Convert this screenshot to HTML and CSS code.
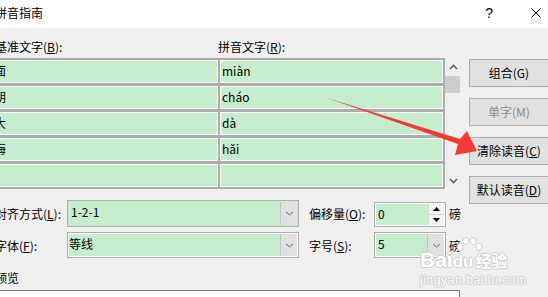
FILE: index.html
```html
<!DOCTYPE html>
<html>

<head>
  <meta name="viewport" content="width=device-width, initial-scale=1.0">
  <link rel="stylesheet" href="styles.css">
</head>

<body>
  <div class="dlg">
    <!-- Title bar -->
    <div class="titlebar">
      <span class="title">拼音指南</span>
      <span class="help">?</span>
      <svg class="close" width="10" height="10" viewBox="0 0 10 10">
        <path d="M0.5 0.5 L9.5 9.5 M9.5 0.5 L0.5 9.5" stroke="#000" stroke-width="1" fill="none"/>
      </svg>
    </div>

    <div class="body">
      <div class="leftcol">
        <div class="labels">
          <span class="lab1">基准文字(<u>B</u>):</span>
          <span>拼音文字(<u>R</u>):</span>
        </div>

        <!-- Character / pinyin list -->
        <div class="list">
          <div class="grid">
            <div class="cell">面</div><div class="cell">miàn</div>
            <div class="cell">朝</div><div class="cell">cháo</div>
            <div class="cell">大</div><div class="cell">dà</div>
            <div class="cell">海</div><div class="cell">hǎi</div>
            <div class="cell"></div><div class="cell"></div>
          </div>
          <div class="scroll">
            <div class="sarrow">
              <svg width="9" height="6" viewBox="0 0 9 6"><path d="M1 5 L4.5 1.5 L8 5" stroke="#606060" stroke-width="1.6" fill="none"/></svg>
            </div>
            <div class="thumb"></div>
            <div class="strack"></div>
            <div class="sarrow">
              <svg width="9" height="6" viewBox="0 0 9 6"><path d="M1 1 L4.5 4.5 L8 1" stroke="#606060" stroke-width="1.6" fill="none"/></svg>
            </div>
          </div>
        </div>

        <!-- Options -->
        <div class="formrow row1">
          <span class="flabel">对齐方式(<u>L</u>):</span>
          <div class="combo">
            <span class="val">1-2-1</span>
            <div class="drop">
              <svg width="9" height="5" viewBox="0 0 9 5"><path d="M1 0.8 L4.5 4 L8 0.8" stroke="#606060" stroke-width="1" fill="none"/></svg>
            </div>
          </div>
          <span class="olabel">偏移量(<u>O</u>):</span>
          <div class="spin inner">
            <span class="val">0</span>
            <div class="spinbtns">
              <div class="sb"><svg width="7" height="4" viewBox="0 0 7 4"><path d="M0 4 L3.5 0 L7 4 Z" fill="#000"/></svg></div>
              <div class="sb"><svg width="7" height="4" viewBox="0 0 7 4"><path d="M0 0 L3.5 4 L7 0 Z" fill="#000"/></svg></div>
            </div>
          </div>
          <span class="unit">磅</span>
        </div>

        <div class="formrow row2">
          <span class="flabel">字体(<u>F</u>):</span>
          <div class="combo inner">
            <span class="val tight">等线</span>
            <div class="drop">
              <svg width="9" height="5" viewBox="0 0 9 5"><path d="M1 0.8 L4.5 4 L8 0.8" stroke="#606060" stroke-width="1" fill="none"/></svg>
            </div>
          </div>
          <span class="olabel">字号(<u>S</u>):</span>
          <div class="spin inner">
            <span class="val">5</span>
            <div class="drop">
              <svg width="9" height="5" viewBox="0 0 9 5"><path d="M1 0.8 L4.5 4 L8 0.8" stroke="#606060" stroke-width="1" fill="none"/></svg>
            </div>
          </div>
          <span class="unit">磅</span>
        </div>

        <div class="plabel">预览</div>
        <div class="preview"></div>
      </div>

      <!-- Buttons -->
      <div class="btncol">
        <div class="btn">组合(G)</div>
        <div class="btn disabled">单字(M)</div>
        <div class="btn">清除读音(<u>C</u>)</div>
        <div class="btn">默认读音(<u>D</u>)</div>
      </div>
    </div>
  </div>

  <!-- Watermark -->
  <div class="watermark">
    <svg class="paw" width="28" height="18" viewBox="0 0 28 18">
      <ellipse cx="5" cy="11" rx="3" ry="3.6" fill="#fff" stroke="#cfcfcf"/>
      <ellipse cx="11" cy="5" rx="3" ry="3.6" fill="#fff" stroke="#cfcfcf"/>
      <ellipse cx="18" cy="5" rx="3" ry="3.6" fill="#fff" stroke="#cfcfcf"/>
      <ellipse cx="24" cy="11" rx="3" ry="3.6" fill="#fff" stroke="#cfcfcf"/>
    </svg>
    <div class="wm-main"><span>Bai</span><span class="du">du</span><span class="jy">经验</span></div>
    <div class="wm-url">jingyan.baidu.com</div>
  </div>

  <!-- Red annotation arrow -->
  <svg class="arrow" width="548" height="297" viewBox="0 0 548 297">
    <polygon points="327,98 460,139 467,131 477,151 455,155 458,144" fill="#f33a35"/>
  </svg>
</body>
</html>
```

FILE: styles.css
```css
/* dialog look, classic windows style */
body {
  margin: 0;
  width: 548px;
  height: 297px;
  overflow: hidden;
  position: relative;
  background-color: #f0f0f0;
  font-family: "Noto Sans CJK SC", "Microsoft YaHei", sans-serif;
  font-size: 12px;
  color: #000;
}

u {
  text-decoration: underline;
  text-underline-offset: 1px;
}

.dlg {
  margin-left: -5px;
  width: 553px;
}

.titlebar {
  height: 28px;
  background-color: #fff;
  display: flex;
  align-items: center;
  padding-bottom: 2px;
  box-sizing: border-box;
}

.title {
  flex: 1;
  line-height: 16px;
}

.help {
  font-size: 14px;
  margin-right: 38px;
  font-family: "Liberation Sans", sans-serif;
}

.close {
  margin-right: 7px;
}

.body {
  display: flex;
}

.leftcol {
  width: 467px;
}

.labels {
  display: flex;
  height: 30px;
  padding-top: 11px;
  box-sizing: border-box;
  line-height: 16px;
}

.lab1 {
  width: 223px;
}

.list {
  display: flex;
  height: 131px;
}

.grid {
  margin-left: -5px;
  width: 455px;
  display: grid;
  grid-template-columns: 226px 223px;
  grid-auto-rows: 23px;
  gap: 3px 2px;
  padding: 2px;
  box-sizing: border-box;
  background-color: #acacac;
}

.cell {
  background-color: #c6edcd;
  border: 1px solid #fff;
  padding-left: 1px;
  line-height: 20px;
  box-sizing: border-box;
}

.scroll {
  width: 17px;
  display: flex;
  flex-direction: column;
}

.sarrow {
  height: 17px;
  display: flex;
  align-items: center;
  justify-content: center;
}

.thumb {
  width: 15px;
  height: 17px;
  margin-top: 1px;
  background-color: #cdcdcd;
}

.strack {
  flex: 1;
}

.formrow {
  display: flex;
  align-items: center;
}

.row1 {
  margin-top: 11px;
  height: 27px;
}

.row2 {
  margin-top: 5px;
  height: 26px;
}

.flabel {
  width: 72px;
}

.combo {
  width: 232px;
  height: 100%;
  box-sizing: border-box;
  border: 1px solid #adadad;
  background-color: #c6edcd;
  display: flex;
}

.combo .val,
.spin .val {
  flex: 1;
  padding-left: 3px;
  line-height: 22px;
}

.combo .tight {
  padding-left: 1px;
}

.inner {
  box-shadow: inset 0 0 0 1px #fff;
}

.drop {
  width: 16px;
  margin: 1px 1px 1px 0;
  border-left: 1px solid #c4c4c4;
  background-color: #e1e1e1;
  display: flex;
  align-items: center;
  justify-content: center;
}

.olabel {
  margin-left: 10px;
  width: 65px;
}

.spin {
  width: 72px;
  height: 26px;
  box-sizing: border-box;
  border: 1px solid #adadad;
  background-color: #c6edcd;
  display: flex;
}

.row1 .spin {
  height: 25px;
  margin-top: 2px;
}

.spinbtns {
  width: 15px;
  margin: 1px 1px 1px 0;
  display: flex;
  flex-direction: column;
  background-color: #f4f4f4;
  border-left: 1px solid #d4d4d4;
}

.sb {
  flex: 1;
  display: flex;
  align-items: center;
  justify-content: center;
}

.sb + .sb {
  border-top: 1px solid #d4d4d4;
}

.unit {
  margin-left: 3px;
}

.plabel {
  margin-top: 12px;
  line-height: 16px;
}

.preview {
  margin-top: 4px;
  width: 465px;
  height: 20px;
  box-sizing: border-box;
  border-top: 1px solid #7f7f7f;
  border-right: 1px solid #7f7f7f;
  background-color: #fff;
}

.btncol {
  padding-left: 7px;
  padding-top: 31px;
}

.btn {
  width: 80px;
  height: 28px;
  margin-bottom: 11px;
  box-sizing: border-box;
  border: 1px solid #adadad;
  background-color: #e1e1e1;
  text-align: center;
  line-height: 25px;
}

.btn.disabled {
  color: #8d8d8d;
}

.watermark {
  position: absolute;
  left: 420px;
  top: 236px;
  color: #fff;
  pointer-events: none;
}

.paw {
  position: absolute;
  left: 35px;
  top: 0;
}

.wm-main {
  margin-top: 12px;
  font-family: "Liberation Sans", "Noto Sans CJK SC", sans-serif;
  font-size: 21px;
  font-weight: bold;
  line-height: 24px;
  text-shadow: 1px 0 #cfcfcf, -1px 0 #cfcfcf, 0 1px #cfcfcf, 0 -1px #cfcfcf;
}

.du {
  font-size: 17px;
}

.jy {
  font-family: "Noto Sans CJK SC", sans-serif;
  font-size: 16px;
  margin-left: 2px;
}

.wm-url {
  font-family: "Liberation Sans", sans-serif;
  font-size: 12px;
  letter-spacing: 0.6px;
  line-height: 14px;
  margin-top: -1px;
  text-shadow: 1px 0 #cfcfcf, -1px 0 #cfcfcf, 0 1px #cfcfcf, 0 -1px #cfcfcf;
}

.arrow {
  position: absolute;
  left: 0;
  top: 0;
  pointer-events: none;
}
```
